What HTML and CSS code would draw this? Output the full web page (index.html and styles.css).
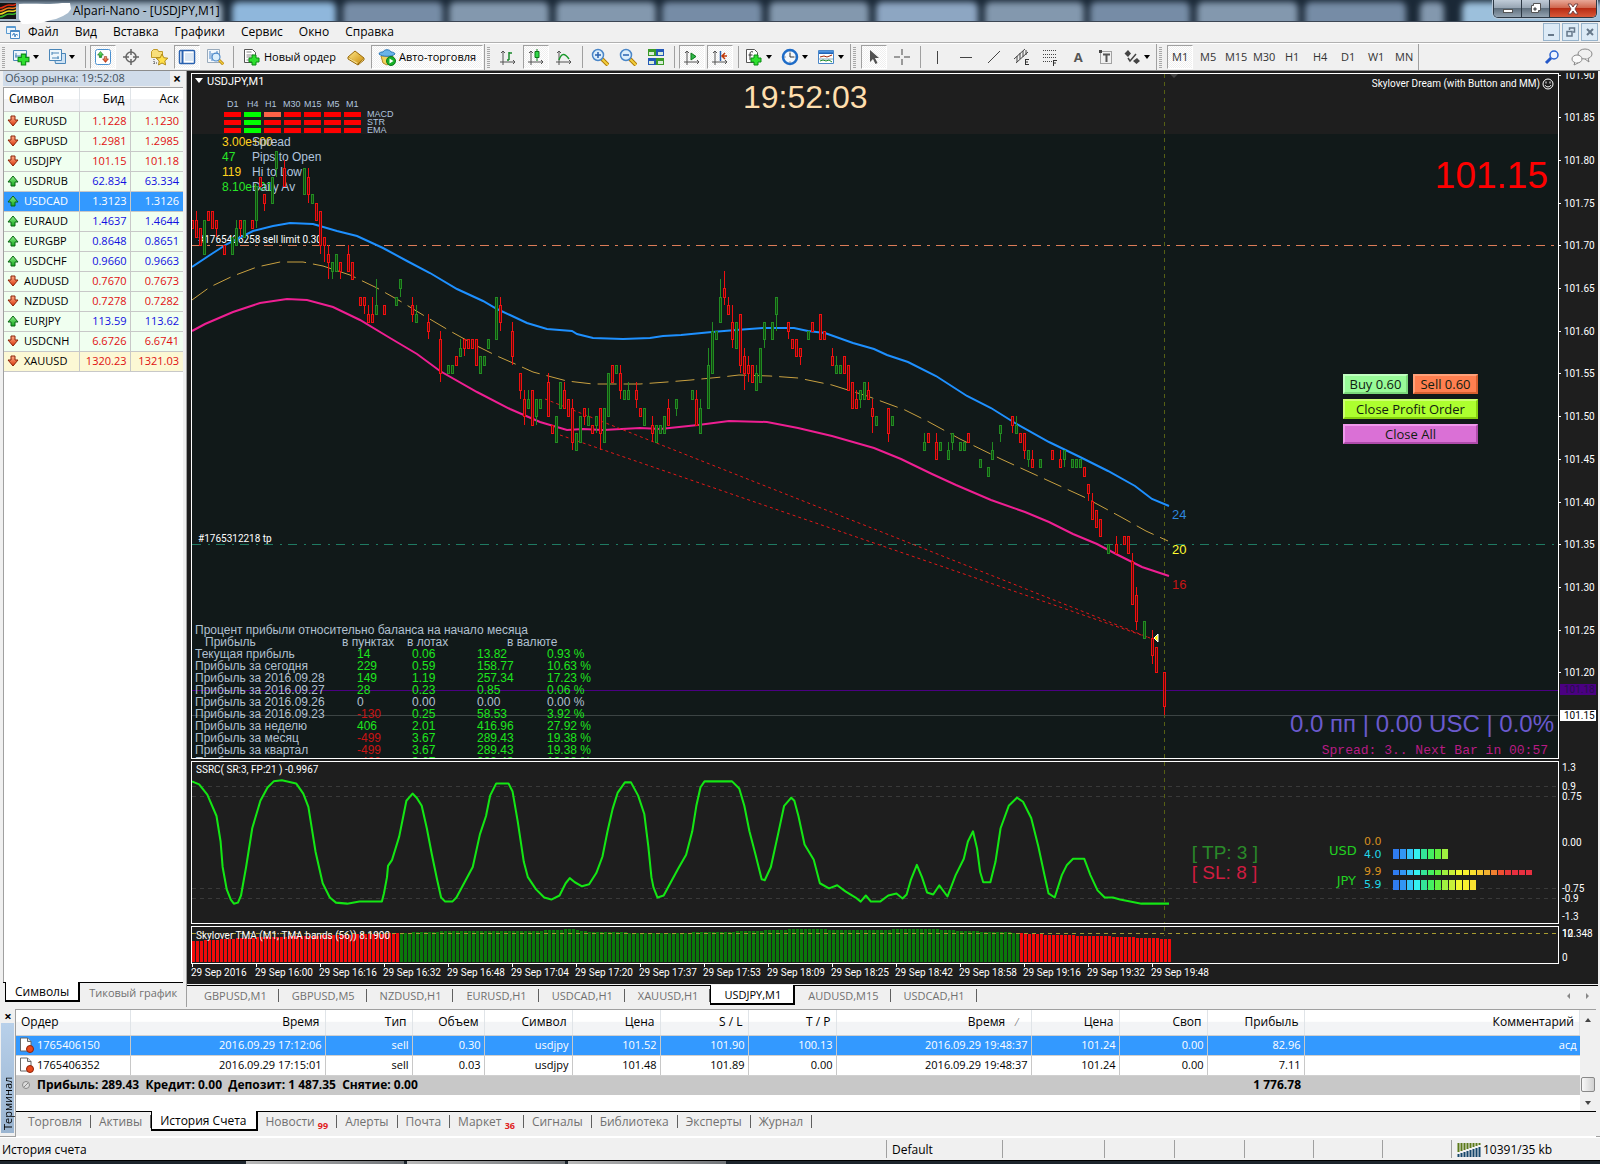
FILE: index.html
```html
<!DOCTYPE html>
<html lang="ru">
<head>
<meta charset="utf-8">
<title>Alpari-Nano - [USDJPY,M1]</title>
<link rel="stylesheet" href="styles.css">
</head>
<body>
<svg width="0" height="0" class="defs" aria-hidden="true">
  <defs>
    <linearGradient id="g-red" x1="0" y1="0" x2="0" y2="1"><stop offset="0" stop-color="#ffb08a"/><stop offset="1" stop-color="#d8340a"/></linearGradient>
    <linearGradient id="g-green" x1="0" y1="0" x2="0" y2="1"><stop offset="0" stop-color="#8ef08a"/><stop offset="1" stop-color="#12a81c"/></linearGradient>
    <linearGradient id="g-gold" x1="0" y1="0" x2="1" y2="1"><stop offset="0" stop-color="#ffe98a"/><stop offset="1" stop-color="#c98a08"/></linearGradient>
    <linearGradient id="g-blue" x1="0" y1="0" x2="0" y2="1"><stop offset="0" stop-color="#5aa0ea"/><stop offset="1" stop-color="#1558ae"/></linearGradient>
    <filter id="soft" x="-5%" y="-50%" width="110%" height="200%"><feGaussianBlur stdDeviation="3"/></filter>
    <symbol id="i-down" viewBox="0 0 12 12"><path d="M4 1h4v4h3L6 11 1 5h3z" fill="url(#g-red)" stroke="#8c2208"/></symbol>
    <symbol id="i-up" viewBox="0 0 12 12"><path d="M4 11h4V7h3L6 1 1 7h3z" fill="url(#g-green)" stroke="#0b6414"/></symbol>
    <symbol id="i-plus" viewBox="0 0 12 12"><path d="M4 1h4v3h3v4H8v3H4V8H1V4h3z" fill="#2ee02e" stroke="#0a8a14"/></symbol>
    <symbol id="i-axes" viewBox="0 0 18 18"><path d="M4 17V3M1 14h15M2 5l2-2 2 2M14 12l2 2-2 2" fill="none" stroke="#555"/></symbol>
    <symbol id="i-order" viewBox="0 0 16 16"><path d="M1.500 1h7l3.500 3.500V14H1.500z" fill="#fff" stroke="#666"/><path d="M8.500 1v3.500H12" fill="#ddd" stroke="#666"/><circle cx="11" cy="12" r="3.500" fill="#e8481c" stroke="#8c2208"/></symbol>
    <symbol id="i-lens" viewBox="0 0 18 18"><path d="M11 11l6 6" stroke="#b07a08" stroke-width="4"/><path d="M11 11l6 6" stroke="#f2cf3e" stroke-width="2"/><circle cx="7" cy="7" r="5.500" fill="#dceefb" stroke="#4a86c8" stroke-width="1.500"/></symbol>
  </defs>
</svg>

<div class="app">
  <header class="titlebar">
    <svg class="titlebar-glass" width="100%" height="22" aria-hidden="true">
      <rect width="4000" height="22" fill="#1a2836"/>
      <g id="glass-tabs" filter="url(#soft)"></g>
    </svg>
    <svg class="app-logo" width="16" height="16" viewBox="0 0 16 16" aria-hidden="true"><rect width="16" height="16" fill="#151515"/><path d="M0 5c4 0 5-3 9-3s5 1 7-1" stroke="#e02a10" stroke-width="1.500" fill="none"/><path d="M0 8c4 0 5-3 9-3s5 1 7-1" stroke="#f07818" stroke-width="1.500" fill="none"/><path d="M0 11c4 0 5-3 9-3s5 1 7-1" stroke="#f0d820" stroke-width="1.500" fill="none"/><path d="M0 14c4 0 5-3 9-3s5 1 7-1" stroke="#38b828" stroke-width="1.500" fill="none"/></svg>
    <svg class="account-mask" width="54" height="22" viewBox="0 0 54 22" aria-hidden="true"><path d="M1 1C14 0 30 2 44 0h8l1 6-3 4-5 3-7 3-5 1-10 3-14 1H4L1 16z" fill="#fff"/></svg>
    <h1 class="title">Alpari-Nano - [USDJPY,M1]</h1>
    <div class="caption">
      <button class="cap" aria-label="Свернуть"><svg width="14" height="12"><rect x="2.500" y="6.500" width="9" height="3" fill="#fff" stroke="#555"/></svg></button>
      <button class="cap" aria-label="Восстановить"><svg width="14" height="14"><path d="M4.500 1.500h7v7h-2v2h-7v-7h2zM5 6v2h2V6z" fill="#fff" stroke="#555"/></svg></button>
      <button class="cap cap-close" aria-label="Закрыть"><svg width="14" height="12"><path d="M2 1h3l2 3 2-3h3L9 6l3 5H9L7 8l-2 3H2l3-5z" fill="#fff" stroke="#744"/></svg></button>
    </div>
  </header>

  <nav class="menubar">
    <svg width="16" height="16" viewBox="0 0 16 16" aria-hidden="true"><path d="M1.500 2.500h9v7h-9z" fill="#eaf4fc" stroke="#5a9ad0"/><path d="M2 3.500h8" stroke="#5a9ad0"/><path d="M5.500 6.500h9v8h-9z" fill="#f4faff" stroke="#4a8ac4"/><path d="M6 7.500h8" stroke="#4a8ac4"/><path d="M7 11h1l1-2 1 4 1-3 1 1h1" fill="none" stroke="#4a8ac4"/></svg>
    <button>Файл</button><button>Вид</button><button>Вставка</button><button>Графики</button><button>Сервис</button><button>Окно</button><button>Справка</button>
    <div class="mdi">
      <button aria-label="Свернуть окно"><svg width="10" height="10"><path d="M1 8h6" stroke="#66788a" stroke-width="2"/></svg></button>
      <button aria-label="Восстановить окно"><svg width="10" height="10"><path d="M3.500 3V1h5v4H7" fill="none" stroke="#66788a" stroke-width="1.500"/><path d="M1 4.500h5V9H1z" fill="none" stroke="#66788a" stroke-width="1.500"/></svg></button>
      <button aria-label="Закрыть окно"><svg width="10" height="10"><path d="M2 2l6 6M8 2L2 8" stroke="#66788a" stroke-width="2"/></svg></button>
    </div>
  </nav>

  <div class="toolbar">
    <div class="group">
      <i class="grip"></i>
      <button class="tb drop" aria-label="Новый график"><svg width="18" height="18"><path d="M1.500 2.500h13v10h-13z" fill="#eef6fc" stroke="#4a86b8"/><path d="M4 5v5M3 8h9" stroke="#4a86b8"/><use href="#i-plus" x="5" y="5" width="13" height="13"/></svg></button>
      <button class="tb drop" aria-label="Профили"><svg width="18" height="18"><path d="M5.500 5.500h12v10h-10z" fill="#cfe2f3" stroke="#4a86b8"/><path d="M1.500 1.500h12v11h-12z" fill="#eef6fc" stroke="#4a86b8"/><path d="M4 4v3M4 5h7M4 10h7M10 8v3" stroke="#4a86b8"/></svg></button>
      <i class="sep"></i>
      <button class="tb on" aria-label="Обзор рынка"><svg width="18" height="18"><rect x="1.500" y="1.500" width="15" height="15" rx="2" fill="#fff" stroke="#4a90d0"/><use href="#i-up" x="3" y="3" width="7" height="7"/><use href="#i-down" x="8" y="8" width="7" height="7"/></svg></button>
      <button class="tb" aria-label="Окно данных"><svg width="18" height="18"><circle cx="9" cy="9" r="5" fill="none" stroke="#666" stroke-width="1.500"/><path d="M9 1v6M9 11v6M1 9h6M11 9h6" stroke="#666" stroke-width="1.500"/></svg></button>
      <button class="tb" aria-label="Навигатор"><svg width="18" height="18"><path d="M1.500 3.500l2-2h4l1 2h4v6h-11z" fill="#f8df7a" stroke="#c09a28"/><path d="M4 11v6M4 15h4" stroke="#444" stroke-dasharray="1 1"/><path d="M12 6l1.800 3.700 4 .5-3 2.700.8 4L12 15l-3.500 2 .7-4-3-2.800 4-.5z" fill="#ffe04a" stroke="#b08a18"/></svg></button>
      <button class="tb on" aria-label="Терминал"><svg width="18" height="18"><rect x="1.500" y="2.500" width="15" height="13" rx="1" fill="#fff" stroke="#2a62b0" stroke-width="1.500"/><path d="M4.500 3v12" stroke="#2a62b0" stroke-width="2"/><path d="M7 6h8M7 8h8M7 10h8M7 12h8" stroke="#b8cfe8"/></svg></button>
      <button class="tb" aria-label="Тестер стратегий"><svg width="18" height="18"><path d="M1.500 1.500h12v13h-12z" fill="#f4f8fc" stroke="#9ab"/><path d="M4 3v8M6 5v8M11 3v8" stroke="#4a86c8"/><use href="#i-lens" x="5" y="4" width="13" height="13"/></svg></button>
      <i class="sep"></i>
      <button class="tb wide"><svg width="18" height="18"><path d="M1.500 1.500h8l3 3v10h-11z" fill="#fff" stroke="#555"/><path d="M3.500 4h5M3.500 7h7M3.500 9h5M3.500 12h4" stroke="#888"/><use href="#i-plus" x="5" y="6" width="12" height="12"/></svg>Новый ордер</button>
      <button class="tb" aria-label="MetaEditor"><svg width="18" height="18"><path d="M1 9l7-6 9 7-6 6z" fill="url(#g-gold)" stroke="#9a6a08"/><path d="M1 9v2l10 6v-2M11 17l6-5v-2" fill="#f6dd88" stroke="#9a6a08"/></svg></button>
      <button class="tb wide on"><svg width="18" height="18"><path d="M3 8h12l-2 6-4 3-4-2z" fill="#f2d25a" stroke="#b08a28"/><path d="M1 6c0-2 3-2 4-2 1-3 7-3 8 0 2 0 4 1 4 2-3 3-13 3-16 0z" fill="#6ab4e8" stroke="#2a78b8"/><circle cx="13" cy="13" r="4.500" fill="#18b028" stroke="#0a7818"/><path d="M11.500 10.500v5l4-2.500z" fill="#fff"/></svg>Авто-торговля</button>
    </div>
    <div class="group">
      <i class="grip"></i>
      <button class="tb" aria-label="Бары"><svg width="18" height="18"><use href="#i-axes" width="18" height="18"/><path d="M10 4v8M10 5h3M8 12h2" stroke="#18882a" stroke-width="1.500"/></svg></button>
      <button class="tb on" aria-label="Свечи"><svg width="18" height="18"><use href="#i-axes" width="18" height="18"/><path d="M10 1v12" stroke="#0a7818"/><path d="M8 3.500h4v6H8z" fill="#30d848" stroke="#0a7818"/></svg></button>
      <button class="tb" aria-label="Линия"><svg width="18" height="18"><use href="#i-axes" width="18" height="18"/><path d="M4 12c2-6 5-8 10-1" fill="none" stroke="#18982a" stroke-width="1.500"/></svg></button>
      <i class="sep"></i>
      <button class="tb" aria-label="Увеличить"><svg width="18" height="18"><use href="#i-lens" width="18" height="18"/><path d="M4 7h6M7 4v6" stroke="#2a62b0" stroke-width="1.500"/></svg></button>
      <button class="tb" aria-label="Уменьшить"><svg width="18" height="18"><use href="#i-lens" width="18" height="18"/><path d="M4 7h6" stroke="#2a62b0" stroke-width="1.500"/></svg></button>
      <button class="tb" aria-label="Плитка"><svg width="18" height="18"><path d="M1 1h8v7H1zM9 10h8v7H9z" fill="#3a9a28"/><path d="M9 1h8v7H9zM1 10h8v7H1z" fill="#2458b8"/><path d="M2 4h5v3H2zM11 4h5v3h-5zM2 13h5v3H2zM11 13h5v3h-5z" fill="#d8ecd8"/></svg></button>
      <i class="sep"></i>
      <button class="tb on" aria-label="Автопрокрутка"><svg width="18" height="18"><use href="#i-axes" width="18" height="18"/><path d="M8 5l5 3.500-5 3.500z" fill="#30b848" stroke="#0a7818"/></svg></button>
      <button class="tb on" aria-label="Сдвиг графика"><svg width="18" height="18"><use href="#i-axes" width="18" height="18"/><path d="M9.500 3v10" stroke="#2a62b0" stroke-width="1.500"/><path d="M16 8h-4M14 5l-3 3 3 3" fill="none" stroke="#c03808" stroke-width="1.500"/></svg></button>
      <i class="sep"></i>
      <button class="tb drop" aria-label="Индикаторы"><svg width="18" height="18"><path d="M1.500 1.500h8l3 3v10h-11z" fill="#fff" stroke="#555"/><path d="M8 4c-2-1-3 0-3 2v6M3.500 7h4" fill="none" stroke="#333"/><use href="#i-plus" x="5" y="6" width="12" height="12"/></svg></button>
      <button class="tb drop" aria-label="Периоды"><svg width="18" height="18"><circle cx="9" cy="9" r="7" fill="#f4f8fc" stroke="#1e6cc8" stroke-width="2.500"/><path d="M9 5v4h4" fill="none" stroke="#333"/><path d="M9 3.500v1M9 13.500v1M3.500 9h1M13.500 9h1" stroke="#555"/></svg></button>
      <button class="tb drop" aria-label="Шаблоны"><svg width="18" height="18"><path d="M1.500 2.500h15v13h-15z" fill="#fff" stroke="#4a86c8"/><path d="M2 3h14v3H2z" fill="url(#g-blue)"/><path d="M3 9l4-1 3 1 5-2" fill="none" stroke="#a02808"/><path d="M2 11h14" stroke="#8ab"/><path d="M3 13l3-1 3 1 3-1 3 2" fill="none" stroke="#18882a"/></svg></button>
    </div>
    <div class="group">
      <i class="grip"></i>
      <button class="tb on" aria-label="Курсор"><svg width="18" height="18"><path d="M5 2v12l3-3 2.500 5 2-1L10 10h4z" fill="#505050"/></svg></button>
      <button class="tb" aria-label="Перекрестие"><svg width="18" height="18"><path d="M9 1v6M9 11v6M1 9h6M11 9h6" stroke="#444"/></svg></button>
      <i class="sep"></i>
      <button class="tb" aria-label="Вертикальная линия"><svg width="18" height="18"><path d="M8.500 3v13" stroke="#444"/></svg></button>
      <button class="tb" aria-label="Горизонтальная линия"><svg width="18" height="18"><path d="M3 9.500h12" stroke="#444"/></svg></button>
      <button class="tb" aria-label="Трендовая линия"><svg width="18" height="18"><path d="M3 15L15 3" stroke="#444"/></svg></button>
      <button class="tb" aria-label="Канал"><svg width="18" height="18"><path d="M1 11L12 1M3 15L15 4M4 8v6M7 5v6M10 3v6M13 2v5" stroke="#444"/><path d="M12.500 11v6M12 11.500h4M12 14h3M12 16.500h4" stroke="#333"/></svg></button>
      <button class="tb" aria-label="Фибоначчи"><svg width="18" height="18"><path d="M2 2.500h13M2 6.500h13M2 9.500h13M2 13.500h9" stroke="#444" stroke-dasharray="1 1"/><path d="M12.500 12v6M12 12.500h4M12 15h3" stroke="#333"/></svg></button>
      <button class="tb glyph">A</button>
      <button class="tb" aria-label="Метка"><svg width="18" height="18"><path d="M3.500 3.500h11v12h-11z" fill="none" stroke="#555" stroke-dasharray="1 1"/><path d="M2 2h3v3H2z" fill="#444"/><path d="M6 6.500h7M9.500 6v8" stroke="#555" stroke-width="2"/></svg></button>
      <button class="tb drop" aria-label="Стрелки"><svg width="18" height="18"><path d="M5 2l3 3.500L5 9 1.500 5.500zM14 10l3 3-3.500 3L10 13z" fill="#444"/><path d="M5 10l2 3 6-7" fill="none" stroke="#444" stroke-width="1.500"/></svg></button>
    </div>
    <div class="group">
      <i class="grip"></i>
      <button class="tb tf on">M1</button><button class="tb tf">M5</button><button class="tb tf">M15</button><button class="tb tf">M30</button><button class="tb tf">H1</button><button class="tb tf">H4</button><button class="tb tf">D1</button><button class="tb tf">W1</button><button class="tb tf">MN</button>
    </div>
    <div class="tools-right">
      <button class="tb" aria-label="Поиск"><svg width="16" height="16"><path d="M2 14l5-5" stroke="#2458c8" stroke-width="3"/><circle cx="10" cy="6" r="4" fill="#eef4ff" stroke="#2a62d0" stroke-width="1.500"/></svg></button>
      <button class="tb" aria-label="Сообщество"><svg width="24" height="18"><ellipse cx="15" cy="6" rx="7" ry="5" fill="#f0f0f0" stroke="#888"/><path d="M18 10l1 4-4-3" fill="#f0f0f0" stroke="#888"/><ellipse cx="7" cy="11" rx="5" ry="4" fill="#fafafa" stroke="#888"/><path d="M5 14l-1 3 4-2" fill="#fafafa" stroke="#888"/></svg></button>
    </div>
  </div>

  <main class="workspace">
    <aside class="watch">
      <div class="watch-title"><span>Обзор рынка: 19:52:08</span><button aria-label="Закрыть">×</button></div>
      <div class="watch-body">
        <table class="quotes">
          <colgroup><col class="q-sym"><col class="q-bid"><col class="q-ask"></colgroup>
          <thead><tr><th>Символ</th><th>Бид</th><th>Аск</th></tr></thead>
          <tbody>
            <tr class="dn"><td><svg><use href="#i-down"/></svg>EURUSD</td><td>1.1228</td><td>1.1230</td></tr>
            <tr class="dn"><td><svg><use href="#i-down"/></svg>GBPUSD</td><td>1.2981</td><td>1.2985</td></tr>
            <tr class="dn"><td><svg><use href="#i-down"/></svg>USDJPY</td><td>101.15</td><td>101.18</td></tr>
            <tr class="up"><td><svg><use href="#i-up"/></svg>USDRUB</td><td>62.834</td><td>63.334</td></tr>
            <tr class="up sel"><td><svg><use href="#i-up"/></svg>USDCAD</td><td>1.3123</td><td>1.3126</td></tr>
            <tr class="up"><td><svg><use href="#i-up"/></svg>EURAUD</td><td>1.4637</td><td>1.4644</td></tr>
            <tr class="up"><td><svg><use href="#i-up"/></svg>EURGBP</td><td>0.8648</td><td>0.8651</td></tr>
            <tr class="up"><td><svg><use href="#i-up"/></svg>USDCHF</td><td>0.9660</td><td>0.9663</td></tr>
            <tr class="dn"><td><svg><use href="#i-down"/></svg>AUDUSD</td><td>0.7670</td><td>0.7673</td></tr>
            <tr class="dn"><td><svg><use href="#i-down"/></svg>NZDUSD</td><td>0.7278</td><td>0.7282</td></tr>
            <tr class="up"><td><svg><use href="#i-up"/></svg>EURJPY</td><td>113.59</td><td>113.62</td></tr>
            <tr class="dn"><td><svg><use href="#i-down"/></svg>USDCNH</td><td>6.6726</td><td>6.6741</td></tr>
            <tr class="dn gold"><td><svg><use href="#i-down"/></svg>XAUUSD</td><td>1320.23</td><td>1321.03</td></tr>
          </tbody>
        </table>
      </div>
      <div class="tabs watch-tabs"><button class="active">Символы</button><button>Тиковый график</button></div>
    </aside>

    <section class="charts">
      <div class="chart-window">
        <div class="plot price">
          <svg class="layer" width="100%" height="684">
            <g transform="translate(-192 -74)">
              <rect x="192" y="134" width="4000" height="640" fill="#111919"/>
              <path d="M195 78h8l-4 5z" fill="#fff"/>
              <text x="207" y="85" class="symbol-text">USDJPY,M1</text>
              <path d="M1170 74h8l-4 4z" fill="#444"/>
              <path d="M192 690.500h4000" stroke="#4b0082"/>
              <path d="M192 715.500h4000" stroke="#3c4444"/>
              <path d="M192 245.500h4000" stroke="#dc7c58" stroke-dasharray="9 6 3 6"/>
              <path d="M192 544.500h4000" stroke="#1f7a62" stroke-dasharray="9 7 2 6"/>
              <path d="M1164.500 74v684" stroke="#566014" stroke-dasharray="4 4"/>
              <text x="198" y="243" class="axis-text">#1765406258 sell limit 0.30</text>
              <text x="198" y="542" class="axis-text">#1765312218 tp</text>
              <g id="mtf" class="mtf-text"></g>
              <g class="info-text">
                <text x="222" y="146" fill="#ffd21e">3.00e+00</text><text x="252" y="146">Spread</text>
                <text x="222" y="161" fill="#28e628">47</text><text x="252" y="161">Pips to Open</text>
                <text x="222" y="176" fill="#ffd21e">119</text><text x="252" y="176">Hi to Low</text>
                <text x="222" y="191" fill="#28e628">8.10e+01</text><text x="252" y="191">Daily Av</text>
              </g>
              <polyline class="band blue" points="192,267 210,255 227,244 253,231 273,226 290,223 313,224 337,231 357,236 383,248 407,261 430,273 457,289 483,301 497,309 510,315 527,323 547,329 572,331 577,334 593,338 623,339 650,338 663,336 681,335 712,332 736,330 763,328 794,328 808,331 825,333 853,343 874,349 887,355 908,362 936,376 967,396 991,408 1015,423 1049,442 1080,457 1108,471 1135,486 1152,499 1169,506"/>
              <polyline class="band mid" points="192,300 210,287 233,276 257,267 280,262 303,262 323,266 350,275 377,288 400,301 423,315 450,331 477,346 497,356 513,363 533,372 567,381 593,384 640,384 667,382 691,380 722,377 739,375 770,376 798,378 832,385 867,396 905,410 929,422 960,439 1001,459 1049,481 1084,497 1121,517 1146,531 1168,541"/>
              <polyline class="band pink" points="192,331 205,324 233,312 260,303 287,299 307,300 333,307 360,320 390,338 417,354 440,371 477,392 510,409 540,422 567,430 583,429 603,430 640,428 660,429 698,425 729,421 767,422 798,428 832,436 874,448 901,459 932,474 956,485 991,500 1025,512 1049,522 1073,534 1097,544 1118,555 1142,567 1169,576"/>
              <path d="M545 399L1150 638M560 435L1150 638" stroke="#e01818" stroke-dasharray="3 3" fill="none"/>
              <g id="candles"></g>
              <path d="M1158 634v8l-4-4z" fill="#fff200" stroke="#fff"/>
              <g class="level-text"><text x="1172" y="519" fill="#2e86dc">24</text><text x="1172" y="554" fill="#ffff30">20</text><text x="1172" y="589" fill="#c81414">16</text></g>
            </g>
          </svg>
          <div class="clock">19:52:03</div>
          <div class="expert">Skylover Dream (with Button and MM)<svg width="12" height="12"><circle cx="6" cy="6" r="5" fill="none" stroke="#fff"/><path d="M4 3.500v2M8 3.500v2M3 7c1 2.500 5 2.500 6 0" fill="none" stroke="#fff"/></svg></div>
          <div class="big-price">101.15</div>
          <div class="trade">
            <button class="buy">Buy 0.60</button><button class="sell">Sell 0.60</button>
            <button class="close-profit">Close Profit Order</button>
            <button class="close-all">Close All</button>
          </div>
          <div class="report">
            <p>Процент прибыли относительно баланса на начало месяца</p>
            <table>
              <thead><tr><th>Прибыль</th><th>в пунктах</th><th>в лотах</th><th colspan="2">в валюте</th></tr></thead>
              <tbody>
                <tr><td>Текущая прибыль</td><td>14</td><td>0.06</td><td>13.82</td><td>0.93 %</td></tr>
                <tr><td>Прибыль за сегодня</td><td>229</td><td>0.59</td><td>158.77</td><td>10.63 %</td></tr>
                <tr><td>Прибыль за 2016.09.28</td><td>149</td><td>1.19</td><td>257.34</td><td>17.23 %</td></tr>
                <tr><td>Прибыль за 2016.09.27</td><td>28</td><td>0.23</td><td>0.85</td><td>0.06 %</td></tr>
                <tr class="zero"><td>Прибыль за 2016.09.26</td><td>0</td><td>0.00</td><td>0.00</td><td>0.00 %</td></tr>
                <tr class="neg"><td>Прибыль за 2016.09.23</td><td>-130</td><td>0.25</td><td>58.53</td><td>3.92 %</td></tr>
                <tr><td>Прибыль за неделю</td><td>406</td><td>2.01</td><td>416.96</td><td>27.92 %</td></tr>
                <tr class="neg"><td>Прибыль за месяц</td><td>-499</td><td>3.67</td><td>289.43</td><td>19.38 %</td></tr>
                <tr class="neg"><td>Прибыль за квартал</td><td>-499</td><td>3.67</td><td>289.43</td><td>19.38 %</td></tr>
                <tr class="neg"><td>Прибыль за год</td><td>-499</td><td>3.67</td><td>289.43</td><td>19.38 %</td></tr>
              </tbody>
            </table>
          </div>
          <div class="result">0.0 пп | 0.00 USC | 0.0%</div>
          <div class="next-bar">Spread: 3.. Next Bar in 00:57</div>
        </div>

        <div class="plot osc">
          <svg class="layer" width="100%" height="161">
            <path d="M0 24.500h4000M0 34.500h4000M0 126.500h4000M0 136.500h4000" stroke="#3a3a3a" stroke-dasharray="4 4"/>
            <path d="M972.500 0v161" stroke="#566014" stroke-dasharray="4 4"/>
          </svg>
          <svg class="layer" width="1366" height="161" viewBox="188 747 1338 158" preserveAspectRatio="none">
            <polyline class="ssrc" points="188,766 195,769 203,779 212,800 216,825 218,850 222,872 226,882 229,886 233,885 236,878 241,850 247,812 255,785 262,772 268,766 276,765 290,768 297,778 302,791 309,835 316,866 323,880 329,885 340,886 352,884 374,884 376,876 379,860 380,849 384,843 391,820 398,785 404,778 408,782 413,790 418,812 423,838 428,862 432,880 436,884 443,884 447,880 455,865 463,850 470,818 476,800 480,780 486,768 498,768 502,776 507,805 513,845 517,860 525,872 533,880 540,882 548,878 554,866 558,861 563,865 570,869 577,867 584,856 590,840 595,815 600,793 605,777 612,767 618,767 625,780 631,798 635,830 638,860 640,870 644,880 650,878 657,865 664,852 672,838 678,815 682,790 686,772 690,766 717,766 724,773 729,790 734,815 740,838 746,862 749,863 755,850 762,818 768,790 775,782 778,785 782,800 788,828 797,843 803,866 812,871 820,868 828,874 838,880 843,884 848,878 853,884 862,884 870,878 878,876 884,881 888,877 892,863 898,848 903,860 908,875 914,877 920,868 928,879 936,858 944,842 948,825 953,815 957,832 960,855 963,865 970,865 975,845 980,812 988,790 996,782 1002,786 1010,802 1017,830 1023,858 1027,876 1033,880 1040,858 1045,848 1051,842 1062,842 1068,858 1075,873 1082,880 1090,880 1097,882 1107,884 1118,886 1145,886"/>
          </svg>
          <div class="osc-title">SSRC( SR:3, FP:21 ) -0.9967</div>
          <div class="risk"><span class="tp">[ TP: 3 ]</span><span class="sl">[ SL: 8 ]</span></div>
          <div class="strength">
            <span class="ccy">USD</span><div class="vals"><b>0.0</b><span>4.0</span></div><svg id="str-usd" width="142" height="24"></svg>
            <span class="ccy">JPY</span><div class="vals"><b>9.9</b><span>5.9</span></div><svg id="str-jpy" width="142" height="24"></svg>
          </div>
        </div>

        <div class="plot tma">
          <svg class="layer" width="100%" height="36">
            <g id="tma-bars"></g>
            <path d="M0 6.500h4000" stroke="#a89c30" stroke-dasharray="4 4"/>
            <path d="M972.500 0v9" stroke="#566014" stroke-dasharray="4 4"/>
            <text x="4" y="12" class="axis-text">Skylover TMA (M1; TMA bands (56)) 8.1900</text>
          </svg>
        </div>

        <svg class="time-axis" width="100%" height="20"><g id="times" class="axis-text"></g></svg>
        <svg class="price-axis" width="39" height="911"><g id="prices" class="axis-text"></g></svg>
      </div>

      <div class="tabs chart-tabs">
        <button>GBPUSD,M1</button><button>GBPUSD,M5</button><button>NZDUSD,H1</button><button>EURUSD,H1</button><button>USDCAD,H1</button><button>XAUUSD,H1</button><button class="active">USDJPY,M1</button><button>AUDUSD,M15</button><button>USDCAD,H1</button>
        <span class="scrollers"><svg width="24" height="10"><path d="M4 2v6L1 5zM20 2v6l3-3z" fill="#888"/></svg></span>
      </div>
    </section>
  </main>

  <section class="terminal">
    <div class="side"><button aria-label="Закрыть">×</button><span>Терминал</span></div>
    <div class="terminal-main">
      <div class="orders-box">
        <table class="orders">
          <colgroup><col class="w114"><col class="w195"><col class="w87"><col class="w72"><col class="w88"><col class="w88"><col class="w88"><col class="w88"><col class="w195"><col class="w88"><col class="w88"><col class="w97"><col></colgroup>
          <thead><tr><th>Ордер</th><th>Время</th><th>Тип</th><th>Объем</th><th>Символ</th><th>Цена</th><th>S / L</th><th>T / P</th><th>Время <small>⁄</small></th><th>Цена</th><th>Своп</th><th>Прибыль</th><th>Комментарий</th></tr></thead>
          <tbody>
            <tr class="sel"><td><svg><use href="#i-order"/></svg>1765406150</td><td>2016.09.29 17:12:06</td><td>sell</td><td>0.30</td><td>usdjpy</td><td>101.52</td><td>101.90</td><td>100.13</td><td>2016.09.29 19:48:37</td><td>101.24</td><td>0.00</td><td>82.96</td><td>асд</td></tr>
            <tr><td><svg><use href="#i-order"/></svg>1765406352</td><td>2016.09.29 17:15:01</td><td>sell</td><td>0.03</td><td>usdjpy</td><td>101.48</td><td>101.89</td><td>0.00</td><td>2016.09.29 19:48:37</td><td>101.24</td><td>0.00</td><td>7.11</td><td></td></tr>
            <tr class="total"><td colspan="11"><svg viewBox="0 0 16 16"><circle cx="7" cy="8" r="3.500" fill="#ddd" stroke="#888"/><path d="M5 10l4-4" stroke="#888"/></svg>Прибыль: 289.43&nbsp; Кредит: 0.00&nbsp; Депозит: 1 487.35&nbsp; Снятие: 0.00</td><td>1 776.78</td><td></td></tr>
          </tbody>
        </table>
        <div class="scroll"><i class="arrow-up"></i><i class="thumb"></i><i class="arrow-down"></i></div>
      </div>
      <div class="tabs term-tabs">
        <button>Торговля</button><button>Активы</button><button class="active">История Счета</button><button>Новости <sub>99</sub></button><button>Алерты</button><button>Почта</button><button>Маркет <sub>36</sub></button><button>Сигналы</button><button>Библиотека</button><button>Эксперты</button><button>Журнал</button>
      </div>
    </div>
  </section>

  <footer class="status">
    <span class="s-main">История счета</span><span class="s-profile">Default</span><span class="s-a"></span><span class="s-b"></span><span class="s-b"></span><span class="s-b"></span><span class="s-b"></span><span class="s-b"></span>
    <span class="s-net"><svg width="24" height="14"><path d="M1.500 0v9M4.500 0v8M7.500 0v7M10.500 0v6M13.500 0v5M16.500 0v4M19.500 0v3M22.500 0v2" stroke="#5c7a1a" stroke-width="2"/><path d="M1.500 11v3M4.500 10v4M7.500 9v5M10.500 8v6M13.500 7v7M16.500 6v8M19.500 5v9M22.500 4v10" stroke="#15466a" stroke-width="2"/></svg>10391/35 kb</span>
  </footer>
  <div class="taskbar"><i></i><i></i><i></i></div>
</div>
<script src="chart.js"></script>
</body>
</html>
```
FILE: styles.css
```css
* { box-sizing: border-box; }
body { margin: 0; background: #f0f0f0; color: #000; font: 12px/16px "Open Sans", "Noto Sans", sans-serif; }
button { font: inherit; color: inherit; background: none; border: 0; padding: 0; margin: 0; }
svg { display: block; flex: none; }
.defs { position: absolute; }
.app { display: flex; flex-direction: column; min-height: 100vh; overflow: hidden; }

/* Title bar */
.titlebar { position: relative; display: flex; align-items: flex-start; height: 22px; border-bottom: 1px solid #3c4654; }
.titlebar-glass { position: absolute; left: 0; top: 0; height: 21px; }
.app-logo { position: relative; margin-top: 3px; }
.account-mask { position: relative; z-index: 2; margin: 3px 0 -6px 2px; }
.title { position: relative; margin: 3px 0 0 1px; font-size: 12px; line-height: 16px; font-weight: 400; }
.caption { position: relative; display: flex; margin: 0 3px 0 auto; height: 18px; border: 1px solid #2c3844; border-top: 0; border-radius: 0 0 5px 5px; overflow: hidden; box-shadow: 0 0 0 1px #b8c8d8; }
.cap { display: grid; place-items: center; width: 28px; height: 17px; background: linear-gradient(#c0ccd8, #98a6b4 45%, #60707e 50%, #93a2b0); border-right: 1px solid #2c3844; }
.cap-close { width: 46px; border-right: 0; background: linear-gradient(#e8a898, #d06850 45%, #b82c14 50%, #d85838); }

/* Menu */
.menubar { display: flex; align-items: center; gap: 16px; height: 21px; padding-left: 5px; border-bottom: 1px solid #b0b0b0; }
.menubar > svg { margin-right: -9px; }
.mdi { display: flex; gap: 2px; margin: 0 2px 0 auto; }
.mdi button { display: grid; place-items: center; width: 17px; height: 18px; border: 1px solid #98b4cc; background: #dceaf6; }

/* Toolbar */
.toolbar { display: flex; height: 28px; border-top: 1px solid #fff; border-bottom: 1px solid #8c8c8c; }
.group { display: flex; align-items: center; border-right: 1px solid #a0a0a0; }
.grip { width: 3px; height: 21px; margin: 0 4px 0 2px; background: repeating-linear-gradient(#a8a8a8 0 1px, #f0f0f0 1px 2px); }
.sep { width: 8px; height: 22px; background: linear-gradient(#a0a0a0, #a0a0a0) center / 1px 100% no-repeat; }
.tb { display: flex; align-items: center; justify-content: center; width: 28px; height: 24px; }
.drop { width: 36px; justify-content: flex-start; padding-left: 3px; gap: 3px; }
.drop::after { content: ""; border: 3px solid transparent; border-top: 4px solid #000; border-bottom: 0; }
.on { width: 26px; margin: 0 1px; background: repeating-conic-gradient(#fff 0 25%, #efefef 0 50%) 0 0 / 2px 2px; border: 1px solid #fff; border-top-color: #a0a0a0; border-left-color: #a0a0a0; }
.wide { width: auto; gap: 3px; padding: 0 6px; font-size: 11px; }
.tf { font-size: 11px; color: #333; }
.glyph { font: bold 13px "Open Sans", sans-serif; color: #555; }
.tools-right { display: flex; align-items: center; gap: 2px; margin: 0 4px 0 auto; }

/* Workspace */
.workspace { display: flex; height: 936px; flex: 1 0 auto; }
.watch { display: flex; flex-direction: column; width: 187px; padding: 0 3px 5px 3px; border-right: 1px solid #a0a0a0; }
.watch-title { display: flex; justify-content: space-between; height: 16px; color: #44525e; line-height: 14px; }
.watch-title span { flex: 0 0 167px; padding-left: 2px; background: #d0dcea; height: 15px; font-size: 11px; }
.watch-title button { width: 12px; font: bold 14px/14px "Open Sans", sans-serif; color: #000; }
.watch-body { flex: 1; background: #fff; border: 1px solid #a0a0a0; border-right: 0; border-bottom: 0; }
.quotes { table-layout: fixed; width: 179px; border-collapse: collapse; font-size: 11px; }
.q-sym { width: 75px; }
.q-bid { width: 51px; }
.quotes th { height: 23px; padding: 0 5px; font-weight: 400; font-size: 12px; text-align: right; background: linear-gradient(#fff 50%, #f3f4f6 50%); border-right: 1px solid #e0e4e8; border-bottom: 1px solid #d0d0d0; }
.quotes th:first-child, .quotes td:first-child { text-align: left; }
.quotes td { height: 20px; padding: 0 3px; text-align: right; border-right: 1px solid #c8c8c8; border-bottom: 1px solid #c8c8c8; background: #f0fff0; }
.quotes td:last-child, .quotes th:last-child { border-right: 0; padding-right: 4px; }
.quotes svg { display: inline-block; width: 12px; height: 12px; margin-right: 5px; vertical-align: -2px; }
.quotes .dn td { color: #e01010; }
.quotes .up td { color: #1010e0; }
.quotes .dn td:first-child, .quotes .up td:first-child { color: #000; }
.quotes .gold td { background: #fcf8d4; }
.quotes .sel td, .quotes .sel td:first-child { background: #3399ff; color: #fff; }

/* Tab strips */
.tabs { display: flex; height: 20px; border-top: 1px solid #000; color: #707070; }
.tabs button { position: relative; padding: 0 12px; white-space: nowrap; }
.tabs button::after { content: ""; position: absolute; right: 0; top: 3px; height: 13px; border-right: 1px solid #606060; }
.tabs .active { margin-top: -1px; padding-top: 1px; background: #fff; color: #000; border: solid #000; border-width: 0 2px 2px 1px; }
.tabs .active::after { display: none; }
.watch-tabs { padding-left: 2px; }
.watch-tabs button { padding: 0 9px; }
.watch-tabs button:last-child { padding: 0; margin-left: 9px; font-size: 11px; }
.watch-tabs button:last-child::after { display: none; }
.chart-tabs { margin-top: 1px; padding-left: 4px; font-size: 11px; }
.chart-tabs button { padding: 0 12px 0 13px; }
.scrollers { margin: 5px 8px 0 auto; }
.term-tabs { padding-left: 4px; height: 26px; border-bottom: 1px solid #fff; }
.term-tabs button { height: 20px; padding: 0 9px 0 8px; font-size: 12px; }
.term-tabs sub { font: bold 9px/9px "Open Sans", sans-serif; color: #e02020; vertical-align: -3px; }

/* Chart */
.charts { flex: 1; min-width: 0; padding-right: 2px; }
.chart-window { display: grid; grid-template-columns: minmax(0, 1fr) 39px; row-gap: 2px; padding: 2px 0 0 4px; background: #1e1e1e; }
.plot { position: relative; overflow: hidden; grid-column: 1; border: 1px solid #fff; }
.price { height: 686px; }
.osc { height: 163px; }
.tma { height: 38px; }
.layer { position: absolute; left: 0; top: 0; }
.time-axis { grid-column: 1 / 3; margin-top: -2px; }
.price-axis { grid-column: 2; grid-row: 1 / 4; margin-bottom: -30px; }
.axis-text { font: 10px Roboto, sans-serif; fill: #fff; }
.symbol-text { font: 11px Roboto, sans-serif; fill: #fff; }
.mtf-text { font: 9px "Liberation Sans", sans-serif; fill: #b0c4de; }
.info-text { font: 12px "Liberation Sans", sans-serif; fill: #b0c4de; }
.level-text { font: 13px "Liberation Sans", sans-serif; }
.band { fill: none; stroke-width: 2; }
.blue { stroke: #1e90ff; }
.pink { stroke: #ee1f92; }
.mid { stroke: #c8a040; stroke-width: 1; stroke-dasharray: 19 7; }
.ssrc { fill: none; stroke: #14e614; stroke-width: 2; stroke-linejoin: round; }
.clock { position: absolute; left: 551px; top: 4px; font: 32px/38px "Liberation Sans", sans-serif; color: #ffdead; }
.expert { position: absolute; right: 4px; top: 3px; display: flex; align-items: center; gap: 2px; font: 10px/14px Roboto, sans-serif; color: #fff; }
.big-price { position: absolute; right: 10px; top: 81px; font: 37px/42px "Liberation Sans", sans-serif; color: #f00; }
.trade { position: absolute; right: 80px; top: 300px; display: grid; grid-template-columns: 65px 65px; gap: 5px; }
.trade button { height: 20px; font-size: 13px; line-height: 16px; color: #102010; border-width: 2px; border-style: solid; }
.buy { background: #98fb98; border-color: #c0ffc0 #7ad87a #7ad87a #c0ffc0; }
.sell { background: #ff7f50; border-color: #ffa078 #d86030 #d86030 #ffa078; }
.close-profit { grid-column: 1 / 3; background: #adff2f; border-color: #ccff70 #86d010 #86d010 #ccff70; }
.close-all { grid-column: 1 / 3; background: #da70d6; border-color: #f098ec #b04cac #b04cac #f098ec; }
.report { position: absolute; left: 3px; top: 550px; font: 12px/12px "Liberation Sans", sans-serif; color: #b0c0d0; }
.report p { margin: 0; }
.report table { table-layout: fixed; width: 422px; border-collapse: collapse; }
.report th, .report td { height: 12px; padding: 0; font-weight: 400; text-align: left; white-space: nowrap; }
.report th:first-child { width: 147px; padding-left: 10px; }
.report th:nth-child(2) { width: 65px; }
.report th:nth-child(3) { width: 70px; }
.report th:nth-child(4) { padding-left: 30px; }
.report td { color: #1ee61e; }
.report td:nth-child(2) { padding-left: 15px; }
.report td:nth-child(3) { padding-left: 5px; }
.report td:first-child, .report .zero td { color: #b0c0d0; }
.report .neg td:nth-child(2) { color: #c81414; }
.result { position: absolute; right: 4px; top: 636px; font: 24px/28px "Liberation Sans", sans-serif; color: #6a5acd; }
.next-bar { position: absolute; right: 10px; top: 668px; font: 13px/17px "Liberation Mono", monospace; color: #b81c84; }
.osc-title { position: absolute; left: 4px; top: 1px; font: 10px/14px Roboto, sans-serif; color: #fff; }
.risk { position: absolute; right: 300px; top: 81px; display: grid; font: 19px/20px "Liberation Sans", sans-serif; }
.tp { color: #2a8a2a; }
.sl { color: #d01c40; }
.strength { position: absolute; right: 23px; top: 73px; display: grid; grid-template-columns: 27px 21px 142px; column-gap: 8px; row-gap: 4px; align-items: center; font: 13px/13px "DejaVu Sans", sans-serif; color: #22d022; }
.ccy { padding-top: 4px; text-align: right; }
.vals { display: grid; font-size: 11px; color: #20d8e8; }
.vals b { font-weight: 400; color: #d89020; }

/* Terminal */
.terminal { display: flex; height: 130px; padding: 2px 4px 0 1px; border-bottom: 1px solid #a0a0a0; }
.side { display: flex; flex-direction: column; width: 14px; }
.side button { height: 14px; font: bold 13px/12px "Open Sans", sans-serif; }
.side span { flex: 1; width: 13px; margin-bottom: 3px; background: linear-gradient(#9ab4d0, #b8d0ea); writing-mode: vertical-rl; transform: rotate(180deg); font-size: 11px; line-height: 13px; padding-top: 3px; }
.terminal-main { flex: 1; min-width: 0; border-left: 1px solid #a0a0a0; border-top: 1px solid #a0a0a0; }
.orders-box { display: flex; height: 101px; background: #fff; }
.orders { table-layout: fixed; flex: 1; align-self: flex-start; width: 0; border-collapse: collapse; font-size: 11px; }
.orders th { height: 25px; padding: 0 5px; font-weight: 400; font-size: 12px; text-align: right; background: linear-gradient(#fff 45%, #f3f4f6 50%); border-right: 1px solid #e0e4e8; border-bottom: 1px solid #d0d0d0; }
.orders td { height: 20px; padding: 0 3px; text-align: right; white-space: nowrap; border-right: 1px solid #c8c8c8; border-bottom: 1px solid #d0d0d0; }
.orders th:first-child, .orders td:first-child { text-align: left; }
.orders td:last-child { border-right: 0; }
.orders small { margin: 0 8px; color: #777; }
.orders svg { display: inline-block; width: 16px; height: 16px; margin-right: 2px; vertical-align: -4px; }
.orders .sel td { background: #3399ff; color: #fff; }
.orders .total td { background: #c8c8c8; border: 0; font-weight: 700; font-size: 12px; }
.w72 { width: 72px; } .w87 { width: 87px; } .w88 { width: 88px; } .w97 { width: 97px; } .w114 { width: 114px; } .w195 { width: 195px; }
.scroll { display: flex; flex-direction: column; align-items: center; width: 16px; padding: 8px 0 6px; background: #f0f0f0; }
.arrow-up { border: 3px solid transparent; border-top: 0; border-bottom: 4px solid #444; margin-bottom: auto; }
.thumb { width: 14px; height: 15px; margin-bottom: 9px; border: 1px solid #888; border-radius: 2px; background: linear-gradient(90deg, #f8f8f8, #d0d0d0); }
.arrow-down { border: 3px solid transparent; border-bottom: 0; border-top: 4px solid #444; }

/* Status bar */
.status { display: flex; align-items: center; height: 23px; border-top: 1px solid #fff; }
.status span { height: 18px; padding: 2px 0 0 5px; border-left: 1px solid #a0a0a0; }
.status .s-main { flex: 1; border: 0; padding-left: 2px; }
.status .s-profile { width: 116px; }
.status .s-a { width: 102px; }
.status .s-b { width: 70px; }
.status .s-b + .s-b + .s-b { width: 69px; }
.status .s-net { display: flex; align-items: center; gap: 2px; width: 149px; }
.taskbar { display: flex; gap: 3px; height: 4px; padding-left: 246px; background: #1c242c; border-top: 1px solid #000; }
.taskbar i { width: 158px; background: linear-gradient(90deg, #b8b8b8, #707478); }
```
FILE: chart.js
```js
const NS = 'http://www.w3.org/2000/svg';
function add(parent, tag, attrs, text) {
  const el = document.createElementNS(NS, tag);
  for (const k in attrs) el.setAttribute(k, attrs[k]);
  if (text) el.textContent = text;
  document.getElementById(parent).appendChild(el);
}

// Candles: x, direction (r/g), then high, body top, body bottom, low in points below 101.90.
const candles = `192 r 17 17 18 18|196 r 16 17 19 19|200 r 18 18 20 20|204 g 17 17 21 21|208 r 16 16 17 17|212 r 16 16 18 18|216 r 17 17 18 19|224 r 20 20 21 21|232 g 19 19 21 21|236 g 17 18 20 20|240 r 17 17 18 19|244 g 17 17 19 19|252 r 17 17 18 18|256 g 13 13 17 18|260 r 12 12 13 13|264 r 14 14 15 16|272 g 12 12 15 15|276 g 9 9 11 12|284 r 10 11 13 13|304 g 11 11 14 14|308 r 11 12 14 15|312 g 14 14 15 15|316 r 15 15 17 17|320 r 16 16 20 21|324 r 19 19 20 22|328 r 20 21 22 24|332 g 22 22 23 24|336 g 21 21 23 23|340 r 22 22 23 24|348 r 20 21 23 23|352 r 22 22 24 24|360 r 26 26 27 27|364 r 26 26 27 28|368 r 27 28 29 29|372 r 26 28 29 29|376 g 24 27 28 28|384 r 27 27 28 28|396 g 26 26 27 27|400 g 24 24 25 26|412 r 26 27 28 29|416 g 27 28 29 29|428 r 28 29 30 31|440 r 30 31 35 36|448 g 34 34 35 35|452 g 34 34 35 35|456 r 33 33 34 34|460 g 31 32 33 33|464 r 31 31 32 33|468 r 31 31 32 32|472 r 31 31 32 32|476 r 31 31 34 34|480 g 33 33 35 35|484 g 33 33 34 34|488 g 31 31 32 32|496 g 26 26 31 31|500 r 26 27 29 30|512 r 29 30 33 34|520 r 35 35 37 38|524 r 37 38 40 41|528 g 37 38 39 39|532 r 37 37 41 41|536 g 38 38 40 41|540 g 38 38 39 39|548 r 35 36 40 40|552 r 41 41 42 42|556 g 40 40 43 43|560 g 36 36 39 39|564 r 36 37 39 39|568 r 38 38 40 40|572 r 38 39 43 44|576 g 42 42 44 44|580 g 40 40 43 43|584 r 39 39 40 41|588 g 39 40 41 41|592 r 41 41 42 42|596 g 40 40 41 42|600 r 39 39 42 44|604 g 39 39 43 43|608 g 35 35 40 40|612 r 34 34 36 36|616 g 34 34 35 35|620 r 34 35 37 38|624 g 37 37 38 38|628 g 36 37 38 38|636 r 36 37 38 39|640 r 39 39 40 40|644 g 39 39 41 41|652 r 40 41 42 43|656 g 41 41 43 43|660 g 41 41 42 42|664 g 40 40 42 42|668 r 38 39 41 41|676 g 38 38 39 40|692 g 37 37 38 38|696 r 37 38 41 41|700 g 38 39 42 42|708 g 32 34 39 39|712 g 29 30 35 35|716 g 30 30 31 31|720 g 24 26 29 29|724 r 23 25 26 27|728 r 26 27 28 28|732 r 27 29 31 32|736 g 29 29 32 32|740 r 28 28 34 35|744 r 32 33 35 37|748 r 33 34 35 36|752 r 34 34 36 36|756 g 34 35 37 37|760 g 32 32 36 36|764 g 29 29 31 32|772 g 29 29 31 31|776 g 26 26 28 30|788 r 29 29 30 31|792 r 31 31 32 32|796 r 31 31 33 33|800 r 32 32 33 34|808 g 30 30 31 31|812 r 29 29 30 30|820 r 28 28 31 31|824 r 30 30 31 31|832 r 32 33 34 34|836 g 33 34 35 35|840 g 34 34 35 35|844 r 33 33 35 35|848 r 34 34 37 37|852 r 36 36 39 39|856 r 37 38 39 39|860 g 37 37 38 39|864 g 36 36 38 38|868 r 36 37 38 38|872 r 38 39 40 42|876 g 40 40 41 41|888 r 39 39 42 43|892 g 40 40 41 41|924 g 42 43 44 44|928 r 42 42 43 43|936 r 42 43 45 45|940 g 43 43 44 44|948 g 43 44 45 45|952 g 42 42 43 44|960 g 43 43 44 44|964 g 43 43 44 44|968 r 42 42 43 43|980 g 45 45 46 46|988 g 46 46 47 47|992 g 43 44 45 45|1000 g 41 41 42 43|1012 r 40 40 41 42|1016 g 40 41 42 42|1020 r 42 42 43 43|1024 r 42 42 44 45|1028 g 44 44 45 46|1032 r 44 45 46 46|1040 g 45 45 46 46|1052 r 44 44 45 45|1060 r 44 45 46 46|1064 g 44 44 45 46|1072 g 45 45 46 46|1076 g 45 45 46 46|1080 g 45 45 46 46|1084 r 46 46 47 47|1088 r 48 48 49 50|1092 r 49 50 52 52|1096 r 51 51 53 53|1100 r 52 52 54 54|1108 g 55 55 56 56|1116 r 54 55 56 56|1124 r 54 54 55 55|1128 r 54 54 56 56|1132 r 56 57 62 62|1136 r 60 61 64 65|1144 g 64 64 66 66|1152 r 65 66 68 69|1156 r 67 67 70 70|1164 r 70 70 74 75`;
const y = n => Math.round(74.5 + n * 8.54);
candles.split('|').forEach(row => {
  const [x, dir, hi, top, bottom, lo] = row.split(' ').map((v, i) => i === 1 ? v : +v);
  const color = dir === 'r' ? '#ee1010' : '#228b22';
  const fill = dir === 'r' ? '#5a0a0a' : '#10480f';
  if (lo > hi) add('candles', 'rect', { x, y: y(hi), width: 1, height: y(lo) - y(hi), fill: color });
  add('candles', 'rect', { x: x - 0.5, y: y(top) + 0.5, width: 2, height: y(bottom) - y(top), fill, stroke: color });
});

// Multi-timeframe signal grid.
[['D1', 227], ['H4', 247], ['H1', 265], ['M30', 283], ['M15', 304], ['M5', 327], ['M1', 346]].forEach(([label, x], c) => {
  add('mtf', 'text', { x, y: 107 }, label);
  for (let r = 0; r < 3; r++) {
    const fill = c === 1 ? '#00ff00' : c === 2 && r === 0 ? '#ff6347' : '#ff0000';
    add('mtf', 'rect', { x: 224 + c * 20, y: 112 + r * 8, width: 17, height: 5, fill });
  }
});
['MACD', 'STR', 'EMA'].forEach((t, i) => add('mtf', 'text', { x: 367, y: 117 + i * 8 }, t));

// Histogram tops, interpolated between the listed bars.
const tops = [[192, 14], [240, 11], [300, 9], [398, 6], [450, 4], [530, 4], [570, 2], [590, 5], [660, 6], [720, 5], [800, 2], [850, 3], [930, 2], [960, 4], [1000, 5], [1018, 6], [1050, 8], [1100, 9], [1168, 12]];
for (let x = 192; x < 1170; x += 4) {
  const i = Math.max(1, tops.findIndex(p => p[0] >= x));
  const [a, b] = [tops[i - 1], tops[i]];
  const top = Math.round(a[1] + (b[1] - a[1]) * (x - a[0]) / (b[0] - a[0]));
  add('tma-bars', 'rect', { x: x - 192, y: top, width: 3, height: 35 - top, fill: x < 398 || x > 1017 ? '#f00a0a' : '#0a780a' });
}

// Time scale.
['2016', '16:00', '16:16', '16:32', '16:48', '17:04', '17:20', '17:37', '17:53', '18:09', '18:25', '18:42', '18:58', '19:16', '19:32', '19:48'].forEach((t, i) => {
  add('times', 'rect', { x: 1 + i * 64, y: 0, width: 1, height: 3, fill: '#fff' });
  add('times', 'text', { x: i * 64, y: 12 }, '29 Sep ' + t);
});

// Price scale; offsets are measured from the top of the chart frame.
for (let i = 0; i < 15; i++) {
  const py = Math.round(1.5 + i * 42.7);
  add('prices', 'rect', { x: 0, y: py, width: 2, height: 1, fill: '#fff' });
  add('prices', 'text', { x: 5, y: py + 4 }, (101.9 - i * 0.05).toFixed(2));
}
add('prices', 'rect', { x: 1, y: 611, width: 36, height: 11, fill: '#4b0082' });
add('prices', 'text', { x: 5, y: 620, style: 'fill:#26104a' }, '101.18');
add('prices', 'rect', { x: 1, y: 637, width: 36, height: 11, fill: '#fff' });
add('prices', 'text', { x: 5, y: 646, style: 'fill:#000' }, '101.15');
[['1.3', 698], ['0.9', 717], ['0.75', 727], ['0.00', 773], ['-0.75', 819], ['-0.9', 829], ['-1.3', 847], ['12.348', 864], ['10', 864], ['0', 888]].forEach(([t, ty]) => add('prices', 'text', { x: 3, y: ty }, t));

// Currency strength ladders.
const ramp = ['#2f7cf0', '#3296f4', '#36c4f8', '#34f0f0', '#34e498', '#44f060', '#62f040', '#a0f040', '#c8f038', '#f0f830', '#f8f030', '#f8e030', '#f8c830', '#f0b030', '#f08030', '#f05030', '#e83838', '#e83040', '#e83040', '#e83040'];
const ladder = (id, n, ly, h) => { for (let i = 0; i < n; i++) add(id, 'rect', { x: i * 7, y: ly, width: 6, height: h, fill: ramp[i] }); };
ladder('str-usd', 8, 13, 10);
ladder('str-jpy', 20, 4, 5);
ladder('str-jpy', 12, 14, 10);

// Blurred background windows seen through the title bar glass.
[[-10, 232, '#a9bccd'], [232, 104, '#8fb7dc'], [343, 100, '#768ca6'], [449, 100, '#8398ae'], [556, 100, '#8398ae'], [662, 100, '#768ca6'], [769, 100, '#8398ae'], [876, 102, '#8da6c2'], [985, 99, '#8398ae'], [1090, 100, '#768ca6'], [1197, 101, '#8398ae'], [1305, 101, '#768ca6'], [1420, 24, '#8398ae'], [1462, 240, '#9cc0dc']].forEach(([x, width, fill]) => add('glass-tabs', 'rect', { x, y: 2, width, height: 36, rx: 6, fill }));
```
